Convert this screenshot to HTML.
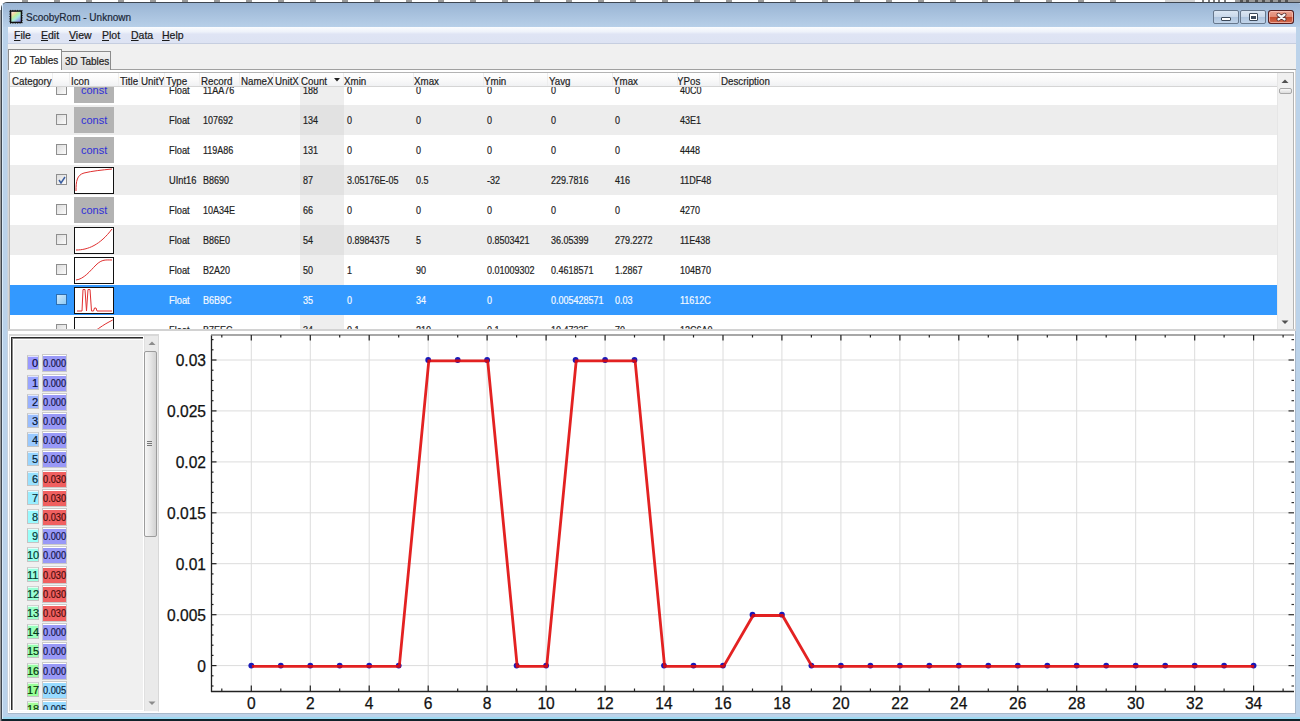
<!DOCTYPE html><html><head><meta charset="utf-8"><style>
*{box-sizing:border-box;margin:0;padding:0}
html,body{width:1300px;height:721px;overflow:hidden;background:#fff;font-family:"Liberation Sans", sans-serif;}
.a{position:absolute}
.t{position:absolute;white-space:nowrap;font-size:10px;line-height:12px;color:#1e1e1e;-webkit-text-stroke:.2px currentColor}
</style></head><body>

<div class="a" style="left:22px;top:0;width:6px;height:2px;background:#555;opacity:.6"></div>
<div class="a" style="left:54px;top:0;width:6px;height:2px;background:#555;opacity:.6"></div>
<div class="a" style="left:86px;top:0;width:6px;height:2px;background:#555;opacity:.6"></div>
<div class="a" style="left:118px;top:0;width:6px;height:2px;background:#555;opacity:.6"></div>
<div class="a" style="left:150px;top:0;width:6px;height:2px;background:#555;opacity:.6"></div>
<div class="a" style="left:182px;top:0;width:6px;height:2px;background:#555;opacity:.6"></div>
<div class="a" style="left:214px;top:0;width:6px;height:2px;background:#555;opacity:.6"></div>
<div class="a" style="left:246px;top:0;width:6px;height:2px;background:#555;opacity:.6"></div>
<div class="a" style="left:278px;top:0;width:6px;height:2px;background:#555;opacity:.6"></div>
<div class="a" style="left:310px;top:0;width:6px;height:2px;background:#555;opacity:.6"></div>
<div class="a" style="left:342px;top:0;width:6px;height:2px;background:#555;opacity:.6"></div>
<div class="a" style="left:374px;top:0;width:6px;height:2px;background:#555;opacity:.6"></div>
<div class="a" style="left:406px;top:0;width:6px;height:2px;background:#555;opacity:.6"></div>
<div class="a" style="left:438px;top:0;width:6px;height:2px;background:#555;opacity:.6"></div>
<div class="a" style="left:470px;top:0;width:6px;height:2px;background:#555;opacity:.6"></div>
<div class="a" style="left:502px;top:0;width:6px;height:2px;background:#555;opacity:.6"></div>
<div class="a" style="left:534px;top:0;width:6px;height:2px;background:#555;opacity:.6"></div>
<div class="a" style="left:566px;top:0;width:6px;height:2px;background:#555;opacity:.6"></div>
<div class="a" style="left:598px;top:0;width:6px;height:2px;background:#555;opacity:.6"></div>
<div class="a" style="left:630px;top:0;width:6px;height:2px;background:#555;opacity:.6"></div>
<div class="a" style="left:662px;top:0;width:6px;height:2px;background:#555;opacity:.6"></div>
<div class="a" style="left:694px;top:0;width:6px;height:2px;background:#555;opacity:.6"></div>
<div class="a" style="left:726px;top:0;width:6px;height:2px;background:#555;opacity:.6"></div>
<div class="a" style="left:758px;top:0;width:6px;height:2px;background:#555;opacity:.6"></div>
<div class="a" style="left:790px;top:0;width:6px;height:2px;background:#555;opacity:.6"></div>
<div class="a" style="left:822px;top:0;width:6px;height:2px;background:#555;opacity:.6"></div>
<div class="a" style="left:854px;top:0;width:6px;height:2px;background:#555;opacity:.6"></div>
<div class="a" style="left:886px;top:0;width:6px;height:2px;background:#555;opacity:.6"></div>
<div class="a" style="left:918px;top:0;width:6px;height:2px;background:#555;opacity:.6"></div>
<div class="a" style="left:950px;top:0;width:6px;height:2px;background:#555;opacity:.6"></div>
<div class="a" style="left:982px;top:0;width:6px;height:2px;background:#555;opacity:.6"></div>
<div class="a" style="left:1014px;top:0;width:6px;height:2px;background:#555;opacity:.6"></div>
<div class="a" style="left:1046px;top:0;width:6px;height:2px;background:#555;opacity:.6"></div>
<div class="a" style="left:1078px;top:0;width:6px;height:2px;background:#555;opacity:.6"></div>
<div class="a" style="left:1110px;top:0;width:6px;height:2px;background:#555;opacity:.6"></div>
<div class="a" style="left:1165px;top:0;width:30px;height:2px;background:#d4d4d4"></div>
<div class="a" style="left:1202px;top:0;width:2px;height:2px;background:#444;opacity:.7"></div>
<div class="a" style="left:1208px;top:0;width:2px;height:2px;background:#444;opacity:.7"></div>
<div class="a" style="left:1213px;top:0;width:2px;height:2px;background:#444;opacity:.7"></div>
<div class="a" style="left:1218px;top:0;width:2px;height:2px;background:#444;opacity:.7"></div>
<div class="a" style="left:1224px;top:0;width:2px;height:2px;background:#444;opacity:.7"></div>
<div class="a" style="left:1235px;top:0;width:65px;height:2px;background:#9a9a9a"></div>
<div class="a" style="left:1240px;top:0;width:3px;height:2px;background:#333;opacity:.7"></div>
<div class="a" style="left:1246px;top:0;width:3px;height:2px;background:#333;opacity:.7"></div>
<div class="a" style="left:1255px;top:0;width:3px;height:2px;background:#333;opacity:.7"></div>
<div class="a" style="left:1262px;top:0;width:3px;height:2px;background:#333;opacity:.7"></div>
<div class="a" style="left:1270px;top:0;width:3px;height:2px;background:#333;opacity:.7"></div>
<div class="a" style="left:1278px;top:0;width:3px;height:2px;background:#333;opacity:.7"></div>
<div class="a" style="left:1285px;top:0;width:3px;height:2px;background:#333;opacity:.7"></div>
<div class="a" style="left:1px;top:2px;width:1310px;height:730px;border:1px solid #3e4650;border-radius:6px 6px 0 0;background:#bcd3ea"></div>
<div class="a" style="left:0;top:10px;width:1px;height:711px;background:#9a9a9a"></div>
<div class="a" style="left:2px;top:3px;width:1300px;height:24px;border-radius:5px 5px 0 0;background:linear-gradient(#9ab5d4,#b7cfe8)"></div>
<div class="a" style="left:2px;top:27px;width:6px;height:690px;background:#bad2ea"></div>
<div class="a" style="left:2px;top:717px;width:1300px;height:2px;background:#9edbf3"></div>
<div class="a" style="left:2px;top:719px;width:1300px;height:2px;background:#10222a"></div>
<div class="a" style="left:2px;top:3px;width:1px;height:716px;background:#d8eafa"></div>
<svg class="a" style="left:9px;top:9px" width="14" height="15" viewBox="0 0 14 15">
<defs><linearGradient id="ig" x1="0" y1="0" x2=".8" y2="1"><stop offset="0" stop-color="#fff4f0"/><stop offset=".25" stop-color="#f8d8a8"/><stop offset=".45" stop-color="#b8f0a0"/><stop offset=".65" stop-color="#a8e8e0"/><stop offset="1" stop-color="#8c8ce8"/></linearGradient></defs>
<rect x="2" y="2.5" width="10" height="10.5" fill="url(#ig)"/>
<rect x="1.6" y="2.1" width="10.8" height="11.3" fill="none" stroke="#111" stroke-width="1.4"/>
<rect x="0.9" y="1.4" width="12.2" height="12.7" fill="none" stroke="#111" stroke-width="1" stroke-dasharray="1 1.4"/></svg>
<div class="t" style="left:26px;top:11px;font-size:10px;line-height:13px;color:#1b2838">ScoobyRom - Unknown</div>
<div class="a" style="left:1213px;top:10px;width:26px;height:14px;border:1px solid #66778c;border-radius:2px;background:linear-gradient(#dbe6f3 0%,#c9d8ea 50%,#aec4de 51%,#c2d5ea 100%);overflow:hidden"><div class="a" style="left:7px;top:6px;width:10px;height:4px;border:1px solid #3d4a5a;border-radius:1px;background:#fff"></div></div>
<div class="a" style="left:1240px;top:10px;width:26px;height:14px;border:1px solid #66778c;border-radius:2px;background:linear-gradient(#dbe6f3 0%,#c9d8ea 50%,#aec4de 51%,#c2d5ea 100%);overflow:hidden"><div class="a" style="left:8px;top:2px;width:9px;height:8px;border:1px solid #3d4a5a;border-radius:1px;background:#fff"><div class="a" style="left:1px;top:2px;width:5px;height:3px;background:#3d4a5a"></div></div></div>
<div class="a" style="left:1268px;top:10px;width:26px;height:14px;border:1px solid #66778c;border-radius:2px;background:linear-gradient(#eba08e 0%,#e08a74 50%,#c44a2c 51%,#d26a4e 100%);overflow:hidden"><svg class="a" style="left:0;top:0" width="24" height="12"><path d="M9.5,3.8 L15.5,8.2 M15.5,3.8 L9.5,8.2" stroke="#5a3030" stroke-width="4" stroke-linecap="round"/><path d="M9.5,3.8 L15.5,8.2 M15.5,3.8 L9.5,8.2" stroke="#f6f6f6" stroke-width="2.3" stroke-linecap="round"/></svg><div class="a" style="left:0;top:0;width:24px;height:12px;border:1px solid rgba(255,210,200,.6);border-radius:2px"></div></div>
<div class="a" style="left:1268px;top:10px;width:26px;height:14px;border:1px solid #5a1e1e;border-radius:3px"></div>
<div class="a" style="left:8px;top:27px;width:1288px;height:686px;background:#f0f0f0"></div>
<div class="a" style="left:8px;top:27px;width:1288px;height:17px;background:linear-gradient(#fbfcfe 0%,#eef2fa 30%,#dfe4f4 45%,#dde3f3 100%);border-bottom:1px solid #c6cee0"></div>
<div class="t" style="left:14px;top:29px;font-size:10.5px;line-height:12px;color:#1a1a1a"><u style="text-decoration:underline;text-underline-offset:1px">F</u>ile</div>
<div class="t" style="left:41px;top:29px;font-size:10.5px;line-height:12px;color:#1a1a1a"><u style="text-decoration:underline;text-underline-offset:1px">E</u>dit</div>
<div class="t" style="left:69px;top:29px;font-size:10.5px;line-height:12px;color:#1a1a1a"><u style="text-decoration:underline;text-underline-offset:1px">V</u>iew</div>
<div class="t" style="left:102px;top:29px;font-size:10.5px;line-height:12px;color:#1a1a1a"><u style="text-decoration:underline;text-underline-offset:1px">P</u>lot</div>
<div class="t" style="left:131px;top:29px;font-size:10.5px;line-height:12px;color:#1a1a1a"><u style="text-decoration:underline;text-underline-offset:1px">D</u>ata</div>
<div class="t" style="left:162px;top:29px;font-size:10.5px;line-height:12px;color:#1a1a1a"><u style="text-decoration:underline;text-underline-offset:1px">H</u>elp</div>
<div class="a" style="left:8px;top:69px;width:1288px;height:1px;background:#a0a0a0"></div>
<div class="a" style="left:61px;top:51px;width:50px;height:19px;border:1px solid #8c8c8c;border-bottom:none;background:linear-gradient(#f2f2f2,#dedede)"></div>
<div class="a" style="left:8px;top:49px;width:54px;height:22px;border:1px solid #8c8c8c;border-bottom:none;background:#fff"></div>
<div class="t" style="left:14px;top:55px;font-size:10px;line-height:12px">2D Tables</div>
<div class="t" style="left:65px;top:56px;font-size:10px;line-height:12px">3D Tables</div>
<div class="a" style="left:8px;top:70px;width:1288px;height:262px;border:1px solid #d6d6d6;border-top:none;background:#fff"></div>
<div class="a" style="left:7px;top:44px;width:1px;height:669px;background:#c6d2e0"></div>
<div class="a" style="left:9px;top:72px;width:1285px;height:258px;border:1px solid #b4b4b4;background:#fff;overflow:hidden" id="tbl">
<div class="a" style="left:0px;top:2px;width:1267px;height:30px;background:#ffffff"></div>
<div class="a" style="left:290px;top:2px;width:44px;height:30px;background:#eeeeee"></div>
<div class="a" style="left:46px;top:11px;width:11px;height:11px;border:1px solid #8f8f8f;background:linear-gradient(135deg,#dcdcdc,#fbfbfb)"></div>
<div class="a" style="left:64px;top:4px;width:40px;height:26px;background:#b3b3b3"></div>
<div class="t" style="left:71px;top:11px;font-size:11px;line-height:12px;color:#2f2fd6;-webkit-text-stroke:0">const</div>
<div class="t" style="left:159px;top:12px;color:#1e1e1e;transform:scaleX(.93);transform-origin:0 0">Float</div>
<div class="t" style="left:193px;top:12px;color:#1e1e1e;transform:scaleX(.9);transform-origin:0 0">11AA76</div>
<div class="t" style="left:293px;top:12px;color:#1e1e1e;transform:scaleX(.9);transform-origin:0 0">188</div>
<div class="t" style="left:337px;top:12px;color:#1e1e1e;transform:scaleX(.9);transform-origin:0 0">0</div>
<div class="t" style="left:406px;top:12px;color:#1e1e1e;transform:scaleX(.9);transform-origin:0 0">0</div>
<div class="t" style="left:477px;top:12px;color:#1e1e1e;transform:scaleX(.9);transform-origin:0 0">0</div>
<div class="t" style="left:541px;top:12px;color:#1e1e1e;transform:scaleX(.9);transform-origin:0 0">0</div>
<div class="t" style="left:605px;top:12px;color:#1e1e1e;transform:scaleX(.9);transform-origin:0 0">0</div>
<div class="t" style="left:670px;top:12px;color:#1e1e1e;transform:scaleX(.9);transform-origin:0 0">40C0</div>
<div class="a" style="left:0px;top:32px;width:1267px;height:30px;background:#ededed"></div>
<div class="a" style="left:290px;top:32px;width:44px;height:30px;background:#e2e2e2"></div>
<div class="a" style="left:46px;top:41px;width:11px;height:11px;border:1px solid #8f8f8f;background:linear-gradient(135deg,#dcdcdc,#fbfbfb)"></div>
<div class="a" style="left:64px;top:34px;width:40px;height:26px;background:#b3b3b3"></div>
<div class="t" style="left:71px;top:41px;font-size:11px;line-height:12px;color:#2f2fd6;-webkit-text-stroke:0">const</div>
<div class="t" style="left:159px;top:42px;color:#1e1e1e;transform:scaleX(.93);transform-origin:0 0">Float</div>
<div class="t" style="left:193px;top:42px;color:#1e1e1e;transform:scaleX(.9);transform-origin:0 0">107692</div>
<div class="t" style="left:293px;top:42px;color:#1e1e1e;transform:scaleX(.9);transform-origin:0 0">134</div>
<div class="t" style="left:337px;top:42px;color:#1e1e1e;transform:scaleX(.9);transform-origin:0 0">0</div>
<div class="t" style="left:406px;top:42px;color:#1e1e1e;transform:scaleX(.9);transform-origin:0 0">0</div>
<div class="t" style="left:477px;top:42px;color:#1e1e1e;transform:scaleX(.9);transform-origin:0 0">0</div>
<div class="t" style="left:541px;top:42px;color:#1e1e1e;transform:scaleX(.9);transform-origin:0 0">0</div>
<div class="t" style="left:605px;top:42px;color:#1e1e1e;transform:scaleX(.9);transform-origin:0 0">0</div>
<div class="t" style="left:670px;top:42px;color:#1e1e1e;transform:scaleX(.9);transform-origin:0 0">43E1</div>
<div class="a" style="left:0px;top:62px;width:1267px;height:30px;background:#ffffff"></div>
<div class="a" style="left:290px;top:62px;width:44px;height:30px;background:#eeeeee"></div>
<div class="a" style="left:46px;top:71px;width:11px;height:11px;border:1px solid #8f8f8f;background:linear-gradient(135deg,#dcdcdc,#fbfbfb)"></div>
<div class="a" style="left:64px;top:64px;width:40px;height:26px;background:#b3b3b3"></div>
<div class="t" style="left:71px;top:71px;font-size:11px;line-height:12px;color:#2f2fd6;-webkit-text-stroke:0">const</div>
<div class="t" style="left:159px;top:72px;color:#1e1e1e;transform:scaleX(.93);transform-origin:0 0">Float</div>
<div class="t" style="left:193px;top:72px;color:#1e1e1e;transform:scaleX(.9);transform-origin:0 0">119A86</div>
<div class="t" style="left:293px;top:72px;color:#1e1e1e;transform:scaleX(.9);transform-origin:0 0">131</div>
<div class="t" style="left:337px;top:72px;color:#1e1e1e;transform:scaleX(.9);transform-origin:0 0">0</div>
<div class="t" style="left:406px;top:72px;color:#1e1e1e;transform:scaleX(.9);transform-origin:0 0">0</div>
<div class="t" style="left:477px;top:72px;color:#1e1e1e;transform:scaleX(.9);transform-origin:0 0">0</div>
<div class="t" style="left:541px;top:72px;color:#1e1e1e;transform:scaleX(.9);transform-origin:0 0">0</div>
<div class="t" style="left:605px;top:72px;color:#1e1e1e;transform:scaleX(.9);transform-origin:0 0">0</div>
<div class="t" style="left:670px;top:72px;color:#1e1e1e;transform:scaleX(.9);transform-origin:0 0">4448</div>
<div class="a" style="left:0px;top:92px;width:1267px;height:30px;background:#ededed"></div>
<div class="a" style="left:290px;top:92px;width:44px;height:30px;background:#e2e2e2"></div>
<div class="a" style="left:46px;top:101px;width:11px;height:11px;border:1px solid #8f8f8f;background:linear-gradient(135deg,#dcdcdc,#fbfbfb)"></div>
<svg class="a" style="left:48px;top:103px" width="8" height="8" viewBox="0 0 8 8"><path d="M1,4 L3,7 L7,1" fill="none" stroke="#3a5ea0" stroke-width="1.5"/></svg>
<svg class="a" style="left:64px;top:94px" width="40" height="27" viewBox="0 0 40 27"><rect x="0.5" y="0.5" width="39" height="26" fill="#fff" stroke="#111"/><path d="M2,24 C2,14 3,8 10,6 C18,4 28,3 38,2" fill="none" stroke="#e03030" stroke-width="1"/></svg>
<div class="t" style="left:159px;top:102px;color:#1e1e1e;transform:scaleX(.93);transform-origin:0 0">UInt16</div>
<div class="t" style="left:193px;top:102px;color:#1e1e1e;transform:scaleX(.9);transform-origin:0 0">B8690</div>
<div class="t" style="left:293px;top:102px;color:#1e1e1e;transform:scaleX(.9);transform-origin:0 0">87</div>
<div class="t" style="left:337px;top:102px;color:#1e1e1e;transform:scaleX(.9);transform-origin:0 0">3.05176E-05</div>
<div class="t" style="left:406px;top:102px;color:#1e1e1e;transform:scaleX(.9);transform-origin:0 0">0.5</div>
<div class="t" style="left:477px;top:102px;color:#1e1e1e;transform:scaleX(.9);transform-origin:0 0">-32</div>
<div class="t" style="left:541px;top:102px;color:#1e1e1e;transform:scaleX(.9);transform-origin:0 0">229.7816</div>
<div class="t" style="left:605px;top:102px;color:#1e1e1e;transform:scaleX(.9);transform-origin:0 0">416</div>
<div class="t" style="left:670px;top:102px;color:#1e1e1e;transform:scaleX(.9);transform-origin:0 0">11DF48</div>
<div class="a" style="left:0px;top:122px;width:1267px;height:30px;background:#ffffff"></div>
<div class="a" style="left:290px;top:122px;width:44px;height:30px;background:#eeeeee"></div>
<div class="a" style="left:46px;top:131px;width:11px;height:11px;border:1px solid #8f8f8f;background:linear-gradient(135deg,#dcdcdc,#fbfbfb)"></div>
<div class="a" style="left:64px;top:124px;width:40px;height:26px;background:#b3b3b3"></div>
<div class="t" style="left:71px;top:131px;font-size:11px;line-height:12px;color:#2f2fd6;-webkit-text-stroke:0">const</div>
<div class="t" style="left:159px;top:132px;color:#1e1e1e;transform:scaleX(.93);transform-origin:0 0">Float</div>
<div class="t" style="left:193px;top:132px;color:#1e1e1e;transform:scaleX(.9);transform-origin:0 0">10A34E</div>
<div class="t" style="left:293px;top:132px;color:#1e1e1e;transform:scaleX(.9);transform-origin:0 0">66</div>
<div class="t" style="left:337px;top:132px;color:#1e1e1e;transform:scaleX(.9);transform-origin:0 0">0</div>
<div class="t" style="left:406px;top:132px;color:#1e1e1e;transform:scaleX(.9);transform-origin:0 0">0</div>
<div class="t" style="left:477px;top:132px;color:#1e1e1e;transform:scaleX(.9);transform-origin:0 0">0</div>
<div class="t" style="left:541px;top:132px;color:#1e1e1e;transform:scaleX(.9);transform-origin:0 0">0</div>
<div class="t" style="left:605px;top:132px;color:#1e1e1e;transform:scaleX(.9);transform-origin:0 0">0</div>
<div class="t" style="left:670px;top:132px;color:#1e1e1e;transform:scaleX(.9);transform-origin:0 0">4270</div>
<div class="a" style="left:0px;top:152px;width:1267px;height:30px;background:#ededed"></div>
<div class="a" style="left:290px;top:152px;width:44px;height:30px;background:#e2e2e2"></div>
<div class="a" style="left:46px;top:161px;width:11px;height:11px;border:1px solid #8f8f8f;background:linear-gradient(135deg,#dcdcdc,#fbfbfb)"></div>
<svg class="a" style="left:64px;top:154px" width="40" height="27" viewBox="0 0 40 27"><rect x="0.5" y="0.5" width="39" height="26" fill="#fff" stroke="#111"/><path d="M2,23 C14,23 26,18 38,2" fill="none" stroke="#e03030" stroke-width="1"/></svg>
<div class="t" style="left:159px;top:162px;color:#1e1e1e;transform:scaleX(.93);transform-origin:0 0">Float</div>
<div class="t" style="left:193px;top:162px;color:#1e1e1e;transform:scaleX(.9);transform-origin:0 0">B86E0</div>
<div class="t" style="left:293px;top:162px;color:#1e1e1e;transform:scaleX(.9);transform-origin:0 0">54</div>
<div class="t" style="left:337px;top:162px;color:#1e1e1e;transform:scaleX(.9);transform-origin:0 0">0.8984375</div>
<div class="t" style="left:406px;top:162px;color:#1e1e1e;transform:scaleX(.9);transform-origin:0 0">5</div>
<div class="t" style="left:477px;top:162px;color:#1e1e1e;transform:scaleX(.9);transform-origin:0 0">0.8503421</div>
<div class="t" style="left:541px;top:162px;color:#1e1e1e;transform:scaleX(.9);transform-origin:0 0">36.05399</div>
<div class="t" style="left:605px;top:162px;color:#1e1e1e;transform:scaleX(.9);transform-origin:0 0">279.2272</div>
<div class="t" style="left:670px;top:162px;color:#1e1e1e;transform:scaleX(.9);transform-origin:0 0">11E438</div>
<div class="a" style="left:0px;top:182px;width:1267px;height:30px;background:#ffffff"></div>
<div class="a" style="left:290px;top:182px;width:44px;height:30px;background:#eeeeee"></div>
<div class="a" style="left:46px;top:191px;width:11px;height:11px;border:1px solid #8f8f8f;background:linear-gradient(135deg,#dcdcdc,#fbfbfb)"></div>
<svg class="a" style="left:64px;top:184px" width="40" height="27" viewBox="0 0 40 27"><rect x="0.5" y="0.5" width="39" height="26" fill="#fff" stroke="#111"/><path d="M2,23 C10,22 16,14 22,8 C28,2 32,3 38,3" fill="none" stroke="#e03030" stroke-width="1"/></svg>
<div class="t" style="left:159px;top:192px;color:#1e1e1e;transform:scaleX(.93);transform-origin:0 0">Float</div>
<div class="t" style="left:193px;top:192px;color:#1e1e1e;transform:scaleX(.9);transform-origin:0 0">B2A20</div>
<div class="t" style="left:293px;top:192px;color:#1e1e1e;transform:scaleX(.9);transform-origin:0 0">50</div>
<div class="t" style="left:337px;top:192px;color:#1e1e1e;transform:scaleX(.9);transform-origin:0 0">1</div>
<div class="t" style="left:406px;top:192px;color:#1e1e1e;transform:scaleX(.9);transform-origin:0 0">90</div>
<div class="t" style="left:477px;top:192px;color:#1e1e1e;transform:scaleX(.9);transform-origin:0 0">0.01009302</div>
<div class="t" style="left:541px;top:192px;color:#1e1e1e;transform:scaleX(.9);transform-origin:0 0">0.4618571</div>
<div class="t" style="left:605px;top:192px;color:#1e1e1e;transform:scaleX(.9);transform-origin:0 0">1.2867</div>
<div class="t" style="left:670px;top:192px;color:#1e1e1e;transform:scaleX(.9);transform-origin:0 0">104B70</div>
<div class="a" style="left:0px;top:212px;width:1267px;height:30px;background:#3399ff"></div>
<div class="a" style="left:46px;top:221px;width:11px;height:11px;border:1px solid #2f6fb0;background:linear-gradient(135deg,#cfe8fb,#8ecbf5)"></div>
<svg class="a" style="left:64px;top:214px" width="40" height="27" viewBox="0 0 40 27"><rect x="0.5" y="0.5" width="39" height="26" fill="#fff" stroke="#111"/><path d="M3,24 L8,24 L9,2.5 L11,2.5 L12.5,24 L14,2.5 L16,2.5 L17.5,24 L19.5,24 L20.5,21 L22,21 L23,24 L38,24" fill="none" stroke="#e03030" stroke-width="1"/></svg>
<div class="t" style="left:159px;top:222px;color:#f4f9ff;transform:scaleX(.93);transform-origin:0 0">Float</div>
<div class="t" style="left:193px;top:222px;color:#f4f9ff;transform:scaleX(.9);transform-origin:0 0">B6B9C</div>
<div class="t" style="left:293px;top:222px;color:#f4f9ff;transform:scaleX(.9);transform-origin:0 0">35</div>
<div class="t" style="left:337px;top:222px;color:#f4f9ff;transform:scaleX(.9);transform-origin:0 0">0</div>
<div class="t" style="left:406px;top:222px;color:#f4f9ff;transform:scaleX(.9);transform-origin:0 0">34</div>
<div class="t" style="left:477px;top:222px;color:#f4f9ff;transform:scaleX(.9);transform-origin:0 0">0</div>
<div class="t" style="left:541px;top:222px;color:#f4f9ff;transform:scaleX(.9);transform-origin:0 0">0.005428571</div>
<div class="t" style="left:605px;top:222px;color:#f4f9ff;transform:scaleX(.9);transform-origin:0 0">0.03</div>
<div class="t" style="left:670px;top:222px;color:#f4f9ff;transform:scaleX(.9);transform-origin:0 0">11612C</div>
<div class="a" style="left:0px;top:242px;width:1267px;height:30px;background:#ffffff"></div>
<div class="a" style="left:290px;top:242px;width:44px;height:30px;background:#eeeeee"></div>
<div class="a" style="left:46px;top:251px;width:11px;height:11px;border:1px solid #8f8f8f;background:linear-gradient(135deg,#dcdcdc,#fbfbfb)"></div>
<svg class="a" style="left:64px;top:244px" width="40" height="27" viewBox="0 0 40 27"><rect x="0.5" y="0.5" width="39" height="26" fill="#fff" stroke="#111"/><path d="M2,25 C10,22 18,16 24.5,11.5 S33,6 38.7,3" fill="none" stroke="#e03030" stroke-width="1"/></svg>
<div class="t" style="left:159px;top:252px;color:#1e1e1e;transform:scaleX(.93);transform-origin:0 0">Float</div>
<div class="t" style="left:193px;top:252px;color:#1e1e1e;transform:scaleX(.9);transform-origin:0 0">B7EEC</div>
<div class="t" style="left:293px;top:252px;color:#1e1e1e;transform:scaleX(.9);transform-origin:0 0">34</div>
<div class="t" style="left:337px;top:252px;color:#1e1e1e;transform:scaleX(.9);transform-origin:0 0">0.1</div>
<div class="t" style="left:406px;top:252px;color:#1e1e1e;transform:scaleX(.9);transform-origin:0 0">210</div>
<div class="t" style="left:477px;top:252px;color:#1e1e1e;transform:scaleX(.9);transform-origin:0 0">0.1</div>
<div class="t" style="left:541px;top:252px;color:#1e1e1e;transform:scaleX(.9);transform-origin:0 0">10.47335</div>
<div class="t" style="left:605px;top:252px;color:#1e1e1e;transform:scaleX(.9);transform-origin:0 0">70</div>
<div class="t" style="left:670px;top:252px;color:#1e1e1e;transform:scaleX(.9);transform-origin:0 0">12C6A0</div>
<div class="a" style="left:0px;top:0px;width:1267px;height:14px;background:linear-gradient(#ffffff 0%,#fafafa 50%,#f0f1f3 100%);border-bottom:1px solid #d5d5d5"></div>
<div class="t" style="left:2px;top:2px;color:#1e1e1e;font-size:10.5px;transform:scaleX(.93);transform-origin:0 0">Category</div>
<div class="t" style="left:61px;top:2px;color:#1e1e1e;font-size:10.5px;transform:scaleX(.93);transform-origin:0 0">Icon</div>
<div class="t" style="left:110px;top:2px;color:#1e1e1e;font-size:10.5px;transform:scaleX(.93);transform-origin:0 0">Title</div>
<div class="t" style="left:131px;top:2px;color:#1e1e1e;font-size:10.5px;transform:scaleX(.93);transform-origin:0 0">UnitY</div>
<div class="t" style="left:156px;top:2px;color:#1e1e1e;font-size:10.5px;transform:scaleX(.93);transform-origin:0 0">Type</div>
<div class="t" style="left:191px;top:2px;color:#1e1e1e;font-size:10.5px;transform:scaleX(.93);transform-origin:0 0">Record</div>
<div class="t" style="left:231px;top:2px;color:#1e1e1e;font-size:10.5px;transform:scaleX(.93);transform-origin:0 0">NameX</div>
<div class="t" style="left:265px;top:2px;color:#1e1e1e;font-size:10.5px;transform:scaleX(.93);transform-origin:0 0">UnitX</div>
<div class="t" style="left:291px;top:2px;color:#1e1e1e;font-size:10.5px;transform:scaleX(.93);transform-origin:0 0">Count</div>
<div class="t" style="left:334px;top:2px;color:#1e1e1e;font-size:10.5px;transform:scaleX(.93);transform-origin:0 0">Xmin</div>
<div class="t" style="left:404px;top:2px;color:#1e1e1e;font-size:10.5px;transform:scaleX(.93);transform-origin:0 0">Xmax</div>
<div class="t" style="left:474px;top:2px;color:#1e1e1e;font-size:10.5px;transform:scaleX(.93);transform-origin:0 0">Ymin</div>
<div class="t" style="left:539px;top:2px;color:#1e1e1e;font-size:10.5px;transform:scaleX(.93);transform-origin:0 0">Yavg</div>
<div class="t" style="left:603px;top:2px;color:#1e1e1e;font-size:10.5px;transform:scaleX(.93);transform-origin:0 0">Ymax</div>
<div class="t" style="left:667px;top:2px;color:#1e1e1e;font-size:10.5px;transform:scaleX(.93);transform-origin:0 0">YPos</div>
<div class="t" style="left:711px;top:2px;color:#1e1e1e;font-size:10.5px;transform:scaleX(.93);transform-origin:0 0">Description</div>
<div class="a" style="left:42px;top:0px;width:1px;height:13px;background:#eeeeee"></div>
<div class="a" style="left:59px;top:0px;width:1px;height:13px;background:#eeeeee"></div>
<div class="a" style="left:108px;top:0px;width:1px;height:13px;background:#eeeeee"></div>
<div class="a" style="left:129px;top:0px;width:1px;height:13px;background:#eeeeee"></div>
<div class="a" style="left:154px;top:0px;width:1px;height:13px;background:#eeeeee"></div>
<div class="a" style="left:189px;top:0px;width:1px;height:13px;background:#eeeeee"></div>
<div class="a" style="left:229px;top:0px;width:1px;height:13px;background:#eeeeee"></div>
<div class="a" style="left:263px;top:0px;width:1px;height:13px;background:#eeeeee"></div>
<div class="a" style="left:289px;top:0px;width:1px;height:13px;background:#eeeeee"></div>
<div class="a" style="left:333px;top:0px;width:1px;height:13px;background:#eeeeee"></div>
<div class="a" style="left:403px;top:0px;width:1px;height:13px;background:#eeeeee"></div>
<div class="a" style="left:473px;top:0px;width:1px;height:13px;background:#eeeeee"></div>
<div class="a" style="left:537px;top:0px;width:1px;height:13px;background:#eeeeee"></div>
<div class="a" style="left:602px;top:0px;width:1px;height:13px;background:#eeeeee"></div>
<div class="a" style="left:667px;top:0px;width:1px;height:13px;background:#eeeeee"></div>
<div class="a" style="left:709px;top:0px;width:1px;height:13px;background:#eeeeee"></div>
<svg class="a" style="left:324px;top:5px" width="6" height="4"><path d="M0,0 L6,0 L3,3.5z" fill="#222"/></svg>
<div class="a" style="left:1267px;top:0px;width:16px;height:257px;background:#f0f0f0;border-left:1px solid #e6e6e6"></div>
<svg class="a" style="left:1271px;top:6px" width="8" height="5"><path d="M0.5,4 L4,0.5 L7.5,4z" fill="#505050"/></svg>
<div class="a" style="left:1269px;top:15px;width:13px;height:6px;border:1px solid #a8a8a8;border-radius:2px;background:linear-gradient(#f8f8f8,#dcdcdc)"></div>
<svg class="a" style="left:1271px;top:247px" width="8" height="5"><path d="M0.5,0.5 L7.5,0.5 L4,4z" fill="#505050"/></svg>
</div>
<div class="a" style="left:8px;top:331px;width:1287px;height:382px;background:#fff"></div>
<div class="a" style="left:1295px;top:331px;width:1px;height:383px;background:#a9b9cb"></div>
<div class="a" style="left:8px;top:713px;width:1288px;height:1px;background:#a9b9cb"></div>
<div class="a" style="left:8px;top:329px;width:1287px;height:2px;background:#d2d2d2"></div>
<div class="a" style="left:9px;top:334px;width:150px;height:378px;background:#fff;border:1px solid #d8d8d8;border-top-width:2px;border-bottom-color:#fafafa"></div>
<div class="a" style="left:11px;top:337px;width:132px;height:373px;background:#f0f0f0;border-top:1px solid #2a2a2a;border-left:1px solid #2a2a2a;box-shadow:inset 1px 1px 0 #8a8a8a,inset 2px 2px 0 #fff"></div>
<div class="a" style="left:14px;top:339px;width:129px;height:371px;overflow:hidden">
<div class="a" style="left:13px;top:16px;width:12px;height:15px;border:1px solid #c4c4c4;border-top-color:#d0d0d0;background:#9999ff;box-shadow:inset 0 1px 0 rgba(255,255,255,.7)"></div>
<div class="t" style="left:13px;top:18px;width:11px;text-align:right;font-size:11px;line-height:13px;color:#060638">0</div>
<div class="a" style="left:28px;top:15px;width:25px;height:18px;border:1px solid #cacaca;background:#9999f7;box-shadow:inset 0 1px 0 #fff"></div>
<div class="t" style="left:29px;top:18px;font-size:11px;line-height:13px;color:#14144a;transform:scaleX(.84);transform-origin:0 0">0.000</div>
<div class="a" style="left:13px;top:36px;width:12px;height:15px;border:1px solid #c4c4c4;border-top-color:#d0d0d0;background:#99a5ff;box-shadow:inset 0 1px 0 rgba(255,255,255,.7)"></div>
<div class="t" style="left:13px;top:38px;width:11px;text-align:right;font-size:11px;line-height:13px;color:#060c38">1</div>
<div class="a" style="left:28px;top:35px;width:25px;height:18px;border:1px solid #cacaca;background:#9999f7;box-shadow:inset 0 1px 0 #fff"></div>
<div class="t" style="left:29px;top:38px;font-size:11px;line-height:13px;color:#14144a;transform:scaleX(.84);transform-origin:0 0">0.000</div>
<div class="a" style="left:13px;top:55px;width:12px;height:15px;border:1px solid #c4c4c4;border-top-color:#d0d0d0;background:#99b1ff;box-shadow:inset 0 1px 0 rgba(255,255,255,.7)"></div>
<div class="t" style="left:13px;top:57px;width:11px;text-align:right;font-size:11px;line-height:13px;color:#061138">2</div>
<div class="a" style="left:28px;top:54px;width:25px;height:18px;border:1px solid #cacaca;background:#9999f7;box-shadow:inset 0 1px 0 #fff"></div>
<div class="t" style="left:29px;top:57px;font-size:11px;line-height:13px;color:#14144a;transform:scaleX(.84);transform-origin:0 0">0.000</div>
<div class="a" style="left:13px;top:74px;width:12px;height:15px;border:1px solid #c4c4c4;border-top-color:#d0d0d0;background:#99bdff;box-shadow:inset 0 1px 0 rgba(255,255,255,.7)"></div>
<div class="t" style="left:13px;top:76px;width:11px;text-align:right;font-size:11px;line-height:13px;color:#061738">3</div>
<div class="a" style="left:28px;top:73px;width:25px;height:18px;border:1px solid #cacaca;background:#9999f7;box-shadow:inset 0 1px 0 #fff"></div>
<div class="t" style="left:29px;top:76px;font-size:11px;line-height:13px;color:#14144a;transform:scaleX(.84);transform-origin:0 0">0.000</div>
<div class="a" style="left:13px;top:93px;width:12px;height:15px;border:1px solid #c4c4c4;border-top-color:#d0d0d0;background:#99c9ff;box-shadow:inset 0 1px 0 rgba(255,255,255,.7)"></div>
<div class="t" style="left:13px;top:95px;width:11px;text-align:right;font-size:11px;line-height:13px;color:#061d38">4</div>
<div class="a" style="left:28px;top:92px;width:25px;height:18px;border:1px solid #cacaca;background:#9999f7;box-shadow:inset 0 1px 0 #fff"></div>
<div class="t" style="left:29px;top:95px;font-size:11px;line-height:13px;color:#14144a;transform:scaleX(.84);transform-origin:0 0">0.000</div>
<div class="a" style="left:13px;top:112px;width:12px;height:15px;border:1px solid #c4c4c4;border-top-color:#d0d0d0;background:#99d5ff;box-shadow:inset 0 1px 0 rgba(255,255,255,.7)"></div>
<div class="t" style="left:13px;top:114px;width:11px;text-align:right;font-size:11px;line-height:13px;color:#062338">5</div>
<div class="a" style="left:28px;top:111px;width:25px;height:18px;border:1px solid #cacaca;background:#9999f7;box-shadow:inset 0 1px 0 #fff"></div>
<div class="t" style="left:29px;top:114px;font-size:11px;line-height:13px;color:#14144a;transform:scaleX(.84);transform-origin:0 0">0.000</div>
<div class="a" style="left:13px;top:132px;width:12px;height:15px;border:1px solid #c4c4c4;border-top-color:#d0d0d0;background:#99e1ff;box-shadow:inset 0 1px 0 rgba(255,255,255,.7)"></div>
<div class="t" style="left:13px;top:134px;width:11px;text-align:right;font-size:11px;line-height:13px;color:#062938">6</div>
<div class="a" style="left:28px;top:131px;width:25px;height:18px;border:1px solid #cacaca;background:#f06060;box-shadow:inset 0 1px 0 #fff"></div>
<div class="t" style="left:29px;top:134px;font-size:11px;line-height:13px;color:#4a0c0c;transform:scaleX(.84);transform-origin:0 0">0.030</div>
<div class="a" style="left:13px;top:151px;width:12px;height:15px;border:1px solid #c4c4c4;border-top-color:#d0d0d0;background:#99edff;box-shadow:inset 0 1px 0 rgba(255,255,255,.7)"></div>
<div class="t" style="left:13px;top:153px;width:11px;text-align:right;font-size:11px;line-height:13px;color:#062f38">7</div>
<div class="a" style="left:28px;top:150px;width:25px;height:18px;border:1px solid #cacaca;background:#f06060;box-shadow:inset 0 1px 0 #fff"></div>
<div class="t" style="left:29px;top:153px;font-size:11px;line-height:13px;color:#4a0c0c;transform:scaleX(.84);transform-origin:0 0">0.030</div>
<div class="a" style="left:13px;top:170px;width:12px;height:15px;border:1px solid #c4c4c4;border-top-color:#d0d0d0;background:#99f9ff;box-shadow:inset 0 1px 0 rgba(255,255,255,.7)"></div>
<div class="t" style="left:13px;top:172px;width:11px;text-align:right;font-size:11px;line-height:13px;color:#063538">8</div>
<div class="a" style="left:28px;top:169px;width:25px;height:18px;border:1px solid #cacaca;background:#f06060;box-shadow:inset 0 1px 0 #fff"></div>
<div class="t" style="left:29px;top:172px;font-size:11px;line-height:13px;color:#4a0c0c;transform:scaleX(.84);transform-origin:0 0">0.030</div>
<div class="a" style="left:13px;top:189px;width:12px;height:15px;border:1px solid #c4c4c4;border-top-color:#d0d0d0;background:#99fff9;box-shadow:inset 0 1px 0 rgba(255,255,255,.7)"></div>
<div class="t" style="left:13px;top:191px;width:11px;text-align:right;font-size:11px;line-height:13px;color:#063835">9</div>
<div class="a" style="left:28px;top:188px;width:25px;height:18px;border:1px solid #cacaca;background:#9999f7;box-shadow:inset 0 1px 0 #fff"></div>
<div class="t" style="left:29px;top:191px;font-size:11px;line-height:13px;color:#14144a;transform:scaleX(.84);transform-origin:0 0">0.000</div>
<div class="a" style="left:13px;top:208px;width:12px;height:15px;border:1px solid #c4c4c4;border-top-color:#d0d0d0;background:#99ffed;box-shadow:inset 0 1px 0 rgba(255,255,255,.7)"></div>
<div class="t" style="left:13px;top:210px;width:11px;text-align:right;font-size:11px;line-height:13px;color:#06382f">10</div>
<div class="a" style="left:28px;top:207px;width:25px;height:18px;border:1px solid #cacaca;background:#9999f7;box-shadow:inset 0 1px 0 #fff"></div>
<div class="t" style="left:29px;top:210px;font-size:11px;line-height:13px;color:#14144a;transform:scaleX(.84);transform-origin:0 0">0.000</div>
<div class="a" style="left:13px;top:228px;width:12px;height:15px;border:1px solid #c4c4c4;border-top-color:#d0d0d0;background:#99ffe1;box-shadow:inset 0 1px 0 rgba(255,255,255,.7)"></div>
<div class="t" style="left:13px;top:230px;width:11px;text-align:right;font-size:11px;line-height:13px;color:#063829">11</div>
<div class="a" style="left:28px;top:227px;width:25px;height:18px;border:1px solid #cacaca;background:#f06060;box-shadow:inset 0 1px 0 #fff"></div>
<div class="t" style="left:29px;top:230px;font-size:11px;line-height:13px;color:#4a0c0c;transform:scaleX(.84);transform-origin:0 0">0.030</div>
<div class="a" style="left:13px;top:247px;width:12px;height:15px;border:1px solid #c4c4c4;border-top-color:#d0d0d0;background:#99ffd5;box-shadow:inset 0 1px 0 rgba(255,255,255,.7)"></div>
<div class="t" style="left:13px;top:249px;width:11px;text-align:right;font-size:11px;line-height:13px;color:#063823">12</div>
<div class="a" style="left:28px;top:246px;width:25px;height:18px;border:1px solid #cacaca;background:#f06060;box-shadow:inset 0 1px 0 #fff"></div>
<div class="t" style="left:29px;top:249px;font-size:11px;line-height:13px;color:#4a0c0c;transform:scaleX(.84);transform-origin:0 0">0.030</div>
<div class="a" style="left:13px;top:266px;width:12px;height:15px;border:1px solid #c4c4c4;border-top-color:#d0d0d0;background:#99ffc9;box-shadow:inset 0 1px 0 rgba(255,255,255,.7)"></div>
<div class="t" style="left:13px;top:268px;width:11px;text-align:right;font-size:11px;line-height:13px;color:#06381d">13</div>
<div class="a" style="left:28px;top:265px;width:25px;height:18px;border:1px solid #cacaca;background:#f06060;box-shadow:inset 0 1px 0 #fff"></div>
<div class="t" style="left:29px;top:268px;font-size:11px;line-height:13px;color:#4a0c0c;transform:scaleX(.84);transform-origin:0 0">0.030</div>
<div class="a" style="left:13px;top:285px;width:12px;height:15px;border:1px solid #c4c4c4;border-top-color:#d0d0d0;background:#99ffbd;box-shadow:inset 0 1px 0 rgba(255,255,255,.7)"></div>
<div class="t" style="left:13px;top:287px;width:11px;text-align:right;font-size:11px;line-height:13px;color:#063817">14</div>
<div class="a" style="left:28px;top:284px;width:25px;height:18px;border:1px solid #cacaca;background:#9999f7;box-shadow:inset 0 1px 0 #fff"></div>
<div class="t" style="left:29px;top:287px;font-size:11px;line-height:13px;color:#14144a;transform:scaleX(.84);transform-origin:0 0">0.000</div>
<div class="a" style="left:13px;top:304px;width:12px;height:15px;border:1px solid #c4c4c4;border-top-color:#d0d0d0;background:#99ffb1;box-shadow:inset 0 1px 0 rgba(255,255,255,.7)"></div>
<div class="t" style="left:13px;top:306px;width:11px;text-align:right;font-size:11px;line-height:13px;color:#063811">15</div>
<div class="a" style="left:28px;top:303px;width:25px;height:18px;border:1px solid #cacaca;background:#9999f7;box-shadow:inset 0 1px 0 #fff"></div>
<div class="t" style="left:29px;top:306px;font-size:11px;line-height:13px;color:#14144a;transform:scaleX(.84);transform-origin:0 0">0.000</div>
<div class="a" style="left:13px;top:324px;width:12px;height:15px;border:1px solid #c4c4c4;border-top-color:#d0d0d0;background:#99ffa5;box-shadow:inset 0 1px 0 rgba(255,255,255,.7)"></div>
<div class="t" style="left:13px;top:326px;width:11px;text-align:right;font-size:11px;line-height:13px;color:#06380c">16</div>
<div class="a" style="left:28px;top:323px;width:25px;height:18px;border:1px solid #cacaca;background:#9999f7;box-shadow:inset 0 1px 0 #fff"></div>
<div class="t" style="left:29px;top:326px;font-size:11px;line-height:13px;color:#14144a;transform:scaleX(.84);transform-origin:0 0">0.000</div>
<div class="a" style="left:13px;top:343px;width:12px;height:15px;border:1px solid #c4c4c4;border-top-color:#d0d0d0;background:#99ff99;box-shadow:inset 0 1px 0 rgba(255,255,255,.7)"></div>
<div class="t" style="left:13px;top:345px;width:11px;text-align:right;font-size:11px;line-height:13px;color:#063806">17</div>
<div class="a" style="left:28px;top:342px;width:25px;height:18px;border:1px solid #cacaca;background:#99dbff;box-shadow:inset 0 1px 0 #fff"></div>
<div class="t" style="left:29px;top:345px;font-size:11px;line-height:13px;color:#0c2440;transform:scaleX(.84);transform-origin:0 0">0.005</div>
<div class="a" style="left:13px;top:362px;width:12px;height:15px;border:1px solid #c4c4c4;border-top-color:#d0d0d0;background:#a5ff99;box-shadow:inset 0 1px 0 rgba(255,255,255,.7)"></div>
<div class="t" style="left:13px;top:364px;width:11px;text-align:right;font-size:11px;line-height:13px;color:#0c3806">18</div>
<div class="a" style="left:28px;top:361px;width:25px;height:18px;border:1px solid #cacaca;background:#99dbff;box-shadow:inset 0 1px 0 #fff"></div>
<div class="t" style="left:29px;top:364px;font-size:11px;line-height:13px;color:#0c2440;transform:scaleX(.84);transform-origin:0 0">0.005</div>
</div>
<div class="a" style="left:144px;top:336px;width:14px;height:375px;background:#eaeaea;border-left:1px solid #e0e0e0"></div>
<svg class="a" style="left:148px;top:341px" width="8" height="5"><path d="M0.5,4 L4,0.5 L7.5,4z" fill="#8c8c8c"/></svg>
<div class="a" style="left:144px;top:351px;width:13px;height:186px;border:1px solid #9c9c9c;border-radius:2px;background:linear-gradient(90deg,#f6f6f6,#e6e6e6 50%,#d2d2d2)"></div>
<div class="a" style="left:147px;top:441px;width:5px;height:5px;border-top:1px solid #777;border-bottom:1px solid #777"><div class="a" style="left:0;top:1px;width:5px;height:1px;background:#777"></div></div>
<svg class="a" style="left:148px;top:701px" width="8" height="5"><path d="M0.5,0.5 L7.5,0.5 L4,4z" fill="#8c8c8c"/></svg>
<svg class="a" style="left:0;top:0" width="1300" height="721" viewBox="0 0 1300 721">
<line x1="251.3" y1="336" x2="251.3" y2="691" stroke="#dcdcdc" stroke-width="1"/>
<line x1="310.3" y1="336" x2="310.3" y2="691" stroke="#dcdcdc" stroke-width="1"/>
<line x1="369.2" y1="336" x2="369.2" y2="691" stroke="#dcdcdc" stroke-width="1"/>
<line x1="428.2" y1="336" x2="428.2" y2="691" stroke="#dcdcdc" stroke-width="1"/>
<line x1="487.1" y1="336" x2="487.1" y2="691" stroke="#dcdcdc" stroke-width="1"/>
<line x1="546.1" y1="336" x2="546.1" y2="691" stroke="#dcdcdc" stroke-width="1"/>
<line x1="605.1" y1="336" x2="605.1" y2="691" stroke="#dcdcdc" stroke-width="1"/>
<line x1="664.0" y1="336" x2="664.0" y2="691" stroke="#dcdcdc" stroke-width="1"/>
<line x1="723.0" y1="336" x2="723.0" y2="691" stroke="#dcdcdc" stroke-width="1"/>
<line x1="781.9" y1="336" x2="781.9" y2="691" stroke="#dcdcdc" stroke-width="1"/>
<line x1="840.9" y1="336" x2="840.9" y2="691" stroke="#dcdcdc" stroke-width="1"/>
<line x1="899.9" y1="336" x2="899.9" y2="691" stroke="#dcdcdc" stroke-width="1"/>
<line x1="958.8" y1="336" x2="958.8" y2="691" stroke="#dcdcdc" stroke-width="1"/>
<line x1="1017.8" y1="336" x2="1017.8" y2="691" stroke="#dcdcdc" stroke-width="1"/>
<line x1="1076.7" y1="336" x2="1076.7" y2="691" stroke="#dcdcdc" stroke-width="1"/>
<line x1="1135.7" y1="336" x2="1135.7" y2="691" stroke="#dcdcdc" stroke-width="1"/>
<line x1="1194.7" y1="336" x2="1194.7" y2="691" stroke="#dcdcdc" stroke-width="1"/>
<line x1="1253.6" y1="336" x2="1253.6" y2="691" stroke="#dcdcdc" stroke-width="1"/>
<line x1="212" y1="665.6" x2="1294" y2="665.6" stroke="#dcdcdc" stroke-width="1"/>
<line x1="212" y1="614.7" x2="1294" y2="614.7" stroke="#dcdcdc" stroke-width="1"/>
<line x1="212" y1="563.7" x2="1294" y2="563.7" stroke="#dcdcdc" stroke-width="1"/>
<line x1="212" y1="512.8" x2="1294" y2="512.8" stroke="#dcdcdc" stroke-width="1"/>
<line x1="212" y1="461.9" x2="1294" y2="461.9" stroke="#dcdcdc" stroke-width="1"/>
<line x1="212" y1="410.9" x2="1294" y2="410.9" stroke="#dcdcdc" stroke-width="1"/>
<line x1="212" y1="360.0" x2="1294" y2="360.0" stroke="#dcdcdc" stroke-width="1"/>
<line x1="211.5" y1="335" x2="211.5" y2="692" stroke="#222" stroke-width="1.3"/>
<line x1="211" y1="691.5" x2="1294" y2="691.5" stroke="#222" stroke-width="1.3"/>
<line x1="211" y1="335" x2="1294" y2="335" stroke="#8a8a8a" stroke-width="1.6"/>
<line x1="211" y1="686.0" x2="213.5" y2="686.0" stroke="#222" stroke-width="1.2"/>
<line x1="1291.5" y1="686.0" x2="1294" y2="686.0" stroke="#333" stroke-width="1.2"/>
<line x1="211" y1="675.8" x2="213.5" y2="675.8" stroke="#222" stroke-width="1.2"/>
<line x1="1291.5" y1="675.8" x2="1294" y2="675.8" stroke="#333" stroke-width="1.2"/>
<line x1="211" y1="665.6" x2="216.5" y2="665.6" stroke="#222" stroke-width="1.2"/>
<line x1="1288.5" y1="665.6" x2="1294" y2="665.6" stroke="#333" stroke-width="1.2"/>
<line x1="211" y1="655.4" x2="213.5" y2="655.4" stroke="#222" stroke-width="1.2"/>
<line x1="1291.5" y1="655.4" x2="1294" y2="655.4" stroke="#333" stroke-width="1.2"/>
<line x1="211" y1="645.2" x2="213.5" y2="645.2" stroke="#222" stroke-width="1.2"/>
<line x1="1291.5" y1="645.2" x2="1294" y2="645.2" stroke="#333" stroke-width="1.2"/>
<line x1="211" y1="635.0" x2="213.5" y2="635.0" stroke="#222" stroke-width="1.2"/>
<line x1="1291.5" y1="635.0" x2="1294" y2="635.0" stroke="#333" stroke-width="1.2"/>
<line x1="211" y1="624.9" x2="213.5" y2="624.9" stroke="#222" stroke-width="1.2"/>
<line x1="1291.5" y1="624.9" x2="1294" y2="624.9" stroke="#333" stroke-width="1.2"/>
<line x1="211" y1="614.7" x2="216.5" y2="614.7" stroke="#222" stroke-width="1.2"/>
<line x1="1288.5" y1="614.7" x2="1294" y2="614.7" stroke="#333" stroke-width="1.2"/>
<line x1="211" y1="604.5" x2="213.5" y2="604.5" stroke="#222" stroke-width="1.2"/>
<line x1="1291.5" y1="604.5" x2="1294" y2="604.5" stroke="#333" stroke-width="1.2"/>
<line x1="211" y1="594.3" x2="213.5" y2="594.3" stroke="#222" stroke-width="1.2"/>
<line x1="1291.5" y1="594.3" x2="1294" y2="594.3" stroke="#333" stroke-width="1.2"/>
<line x1="211" y1="584.1" x2="213.5" y2="584.1" stroke="#222" stroke-width="1.2"/>
<line x1="1291.5" y1="584.1" x2="1294" y2="584.1" stroke="#333" stroke-width="1.2"/>
<line x1="211" y1="573.9" x2="213.5" y2="573.9" stroke="#222" stroke-width="1.2"/>
<line x1="1291.5" y1="573.9" x2="1294" y2="573.9" stroke="#333" stroke-width="1.2"/>
<line x1="211" y1="563.7" x2="216.5" y2="563.7" stroke="#222" stroke-width="1.2"/>
<line x1="1288.5" y1="563.7" x2="1294" y2="563.7" stroke="#333" stroke-width="1.2"/>
<line x1="211" y1="553.5" x2="213.5" y2="553.5" stroke="#222" stroke-width="1.2"/>
<line x1="1291.5" y1="553.5" x2="1294" y2="553.5" stroke="#333" stroke-width="1.2"/>
<line x1="211" y1="543.4" x2="213.5" y2="543.4" stroke="#222" stroke-width="1.2"/>
<line x1="1291.5" y1="543.4" x2="1294" y2="543.4" stroke="#333" stroke-width="1.2"/>
<line x1="211" y1="533.2" x2="213.5" y2="533.2" stroke="#222" stroke-width="1.2"/>
<line x1="1291.5" y1="533.2" x2="1294" y2="533.2" stroke="#333" stroke-width="1.2"/>
<line x1="211" y1="523.0" x2="213.5" y2="523.0" stroke="#222" stroke-width="1.2"/>
<line x1="1291.5" y1="523.0" x2="1294" y2="523.0" stroke="#333" stroke-width="1.2"/>
<line x1="211" y1="512.8" x2="216.5" y2="512.8" stroke="#222" stroke-width="1.2"/>
<line x1="1288.5" y1="512.8" x2="1294" y2="512.8" stroke="#333" stroke-width="1.2"/>
<line x1="211" y1="502.6" x2="213.5" y2="502.6" stroke="#222" stroke-width="1.2"/>
<line x1="1291.5" y1="502.6" x2="1294" y2="502.6" stroke="#333" stroke-width="1.2"/>
<line x1="211" y1="492.4" x2="213.5" y2="492.4" stroke="#222" stroke-width="1.2"/>
<line x1="1291.5" y1="492.4" x2="1294" y2="492.4" stroke="#333" stroke-width="1.2"/>
<line x1="211" y1="482.2" x2="213.5" y2="482.2" stroke="#222" stroke-width="1.2"/>
<line x1="1291.5" y1="482.2" x2="1294" y2="482.2" stroke="#333" stroke-width="1.2"/>
<line x1="211" y1="472.1" x2="213.5" y2="472.1" stroke="#222" stroke-width="1.2"/>
<line x1="1291.5" y1="472.1" x2="1294" y2="472.1" stroke="#333" stroke-width="1.2"/>
<line x1="211" y1="461.9" x2="216.5" y2="461.9" stroke="#222" stroke-width="1.2"/>
<line x1="1288.5" y1="461.9" x2="1294" y2="461.9" stroke="#333" stroke-width="1.2"/>
<line x1="211" y1="451.7" x2="213.5" y2="451.7" stroke="#222" stroke-width="1.2"/>
<line x1="1291.5" y1="451.7" x2="1294" y2="451.7" stroke="#333" stroke-width="1.2"/>
<line x1="211" y1="441.5" x2="213.5" y2="441.5" stroke="#222" stroke-width="1.2"/>
<line x1="1291.5" y1="441.5" x2="1294" y2="441.5" stroke="#333" stroke-width="1.2"/>
<line x1="211" y1="431.3" x2="213.5" y2="431.3" stroke="#222" stroke-width="1.2"/>
<line x1="1291.5" y1="431.3" x2="1294" y2="431.3" stroke="#333" stroke-width="1.2"/>
<line x1="211" y1="421.1" x2="213.5" y2="421.1" stroke="#222" stroke-width="1.2"/>
<line x1="1291.5" y1="421.1" x2="1294" y2="421.1" stroke="#333" stroke-width="1.2"/>
<line x1="211" y1="410.9" x2="216.5" y2="410.9" stroke="#222" stroke-width="1.2"/>
<line x1="1288.5" y1="410.9" x2="1294" y2="410.9" stroke="#333" stroke-width="1.2"/>
<line x1="211" y1="400.7" x2="213.5" y2="400.7" stroke="#222" stroke-width="1.2"/>
<line x1="1291.5" y1="400.7" x2="1294" y2="400.7" stroke="#333" stroke-width="1.2"/>
<line x1="211" y1="390.6" x2="213.5" y2="390.6" stroke="#222" stroke-width="1.2"/>
<line x1="1291.5" y1="390.6" x2="1294" y2="390.6" stroke="#333" stroke-width="1.2"/>
<line x1="211" y1="380.4" x2="213.5" y2="380.4" stroke="#222" stroke-width="1.2"/>
<line x1="1291.5" y1="380.4" x2="1294" y2="380.4" stroke="#333" stroke-width="1.2"/>
<line x1="211" y1="370.2" x2="213.5" y2="370.2" stroke="#222" stroke-width="1.2"/>
<line x1="1291.5" y1="370.2" x2="1294" y2="370.2" stroke="#333" stroke-width="1.2"/>
<line x1="211" y1="360.0" x2="216.5" y2="360.0" stroke="#222" stroke-width="1.2"/>
<line x1="1288.5" y1="360.0" x2="1294" y2="360.0" stroke="#333" stroke-width="1.2"/>
<line x1="211" y1="349.8" x2="213.5" y2="349.8" stroke="#222" stroke-width="1.2"/>
<line x1="1291.5" y1="349.8" x2="1294" y2="349.8" stroke="#333" stroke-width="1.2"/>
<line x1="211" y1="339.6" x2="213.5" y2="339.6" stroke="#222" stroke-width="1.2"/>
<line x1="1291.5" y1="339.6" x2="1294" y2="339.6" stroke="#333" stroke-width="1.2"/>
<line x1="221.8" y1="691" x2="221.8" y2="688.5" stroke="#222" stroke-width="1.2"/>
<line x1="221.8" y1="335" x2="221.8" y2="337.5" stroke="#222" stroke-width="1.2"/>
<line x1="251.3" y1="691" x2="251.3" y2="685.5" stroke="#222" stroke-width="1.2"/>
<line x1="251.3" y1="335" x2="251.3" y2="340.5" stroke="#222" stroke-width="1.2"/>
<line x1="280.8" y1="691" x2="280.8" y2="688.5" stroke="#222" stroke-width="1.2"/>
<line x1="280.8" y1="335" x2="280.8" y2="337.5" stroke="#222" stroke-width="1.2"/>
<line x1="310.3" y1="691" x2="310.3" y2="685.5" stroke="#222" stroke-width="1.2"/>
<line x1="310.3" y1="335" x2="310.3" y2="340.5" stroke="#222" stroke-width="1.2"/>
<line x1="339.7" y1="691" x2="339.7" y2="688.5" stroke="#222" stroke-width="1.2"/>
<line x1="339.7" y1="335" x2="339.7" y2="337.5" stroke="#222" stroke-width="1.2"/>
<line x1="369.2" y1="691" x2="369.2" y2="685.5" stroke="#222" stroke-width="1.2"/>
<line x1="369.2" y1="335" x2="369.2" y2="340.5" stroke="#222" stroke-width="1.2"/>
<line x1="398.7" y1="691" x2="398.7" y2="688.5" stroke="#222" stroke-width="1.2"/>
<line x1="398.7" y1="335" x2="398.7" y2="337.5" stroke="#222" stroke-width="1.2"/>
<line x1="428.2" y1="691" x2="428.2" y2="685.5" stroke="#222" stroke-width="1.2"/>
<line x1="428.2" y1="335" x2="428.2" y2="340.5" stroke="#222" stroke-width="1.2"/>
<line x1="457.7" y1="691" x2="457.7" y2="688.5" stroke="#222" stroke-width="1.2"/>
<line x1="457.7" y1="335" x2="457.7" y2="337.5" stroke="#222" stroke-width="1.2"/>
<line x1="487.1" y1="691" x2="487.1" y2="685.5" stroke="#222" stroke-width="1.2"/>
<line x1="487.1" y1="335" x2="487.1" y2="340.5" stroke="#222" stroke-width="1.2"/>
<line x1="516.6" y1="691" x2="516.6" y2="688.5" stroke="#222" stroke-width="1.2"/>
<line x1="516.6" y1="335" x2="516.6" y2="337.5" stroke="#222" stroke-width="1.2"/>
<line x1="546.1" y1="691" x2="546.1" y2="685.5" stroke="#222" stroke-width="1.2"/>
<line x1="546.1" y1="335" x2="546.1" y2="340.5" stroke="#222" stroke-width="1.2"/>
<line x1="575.6" y1="691" x2="575.6" y2="688.5" stroke="#222" stroke-width="1.2"/>
<line x1="575.6" y1="335" x2="575.6" y2="337.5" stroke="#222" stroke-width="1.2"/>
<line x1="605.1" y1="691" x2="605.1" y2="685.5" stroke="#222" stroke-width="1.2"/>
<line x1="605.1" y1="335" x2="605.1" y2="340.5" stroke="#222" stroke-width="1.2"/>
<line x1="634.5" y1="691" x2="634.5" y2="688.5" stroke="#222" stroke-width="1.2"/>
<line x1="634.5" y1="335" x2="634.5" y2="337.5" stroke="#222" stroke-width="1.2"/>
<line x1="664.0" y1="691" x2="664.0" y2="685.5" stroke="#222" stroke-width="1.2"/>
<line x1="664.0" y1="335" x2="664.0" y2="340.5" stroke="#222" stroke-width="1.2"/>
<line x1="693.5" y1="691" x2="693.5" y2="688.5" stroke="#222" stroke-width="1.2"/>
<line x1="693.5" y1="335" x2="693.5" y2="337.5" stroke="#222" stroke-width="1.2"/>
<line x1="723.0" y1="691" x2="723.0" y2="685.5" stroke="#222" stroke-width="1.2"/>
<line x1="723.0" y1="335" x2="723.0" y2="340.5" stroke="#222" stroke-width="1.2"/>
<line x1="752.5" y1="691" x2="752.5" y2="688.5" stroke="#222" stroke-width="1.2"/>
<line x1="752.5" y1="335" x2="752.5" y2="337.5" stroke="#222" stroke-width="1.2"/>
<line x1="781.9" y1="691" x2="781.9" y2="685.5" stroke="#222" stroke-width="1.2"/>
<line x1="781.9" y1="335" x2="781.9" y2="340.5" stroke="#222" stroke-width="1.2"/>
<line x1="811.4" y1="691" x2="811.4" y2="688.5" stroke="#222" stroke-width="1.2"/>
<line x1="811.4" y1="335" x2="811.4" y2="337.5" stroke="#222" stroke-width="1.2"/>
<line x1="840.9" y1="691" x2="840.9" y2="685.5" stroke="#222" stroke-width="1.2"/>
<line x1="840.9" y1="335" x2="840.9" y2="340.5" stroke="#222" stroke-width="1.2"/>
<line x1="870.4" y1="691" x2="870.4" y2="688.5" stroke="#222" stroke-width="1.2"/>
<line x1="870.4" y1="335" x2="870.4" y2="337.5" stroke="#222" stroke-width="1.2"/>
<line x1="899.9" y1="691" x2="899.9" y2="685.5" stroke="#222" stroke-width="1.2"/>
<line x1="899.9" y1="335" x2="899.9" y2="340.5" stroke="#222" stroke-width="1.2"/>
<line x1="929.3" y1="691" x2="929.3" y2="688.5" stroke="#222" stroke-width="1.2"/>
<line x1="929.3" y1="335" x2="929.3" y2="337.5" stroke="#222" stroke-width="1.2"/>
<line x1="958.8" y1="691" x2="958.8" y2="685.5" stroke="#222" stroke-width="1.2"/>
<line x1="958.8" y1="335" x2="958.8" y2="340.5" stroke="#222" stroke-width="1.2"/>
<line x1="988.3" y1="691" x2="988.3" y2="688.5" stroke="#222" stroke-width="1.2"/>
<line x1="988.3" y1="335" x2="988.3" y2="337.5" stroke="#222" stroke-width="1.2"/>
<line x1="1017.8" y1="691" x2="1017.8" y2="685.5" stroke="#222" stroke-width="1.2"/>
<line x1="1017.8" y1="335" x2="1017.8" y2="340.5" stroke="#222" stroke-width="1.2"/>
<line x1="1047.3" y1="691" x2="1047.3" y2="688.5" stroke="#222" stroke-width="1.2"/>
<line x1="1047.3" y1="335" x2="1047.3" y2="337.5" stroke="#222" stroke-width="1.2"/>
<line x1="1076.7" y1="691" x2="1076.7" y2="685.5" stroke="#222" stroke-width="1.2"/>
<line x1="1076.7" y1="335" x2="1076.7" y2="340.5" stroke="#222" stroke-width="1.2"/>
<line x1="1106.2" y1="691" x2="1106.2" y2="688.5" stroke="#222" stroke-width="1.2"/>
<line x1="1106.2" y1="335" x2="1106.2" y2="337.5" stroke="#222" stroke-width="1.2"/>
<line x1="1135.7" y1="691" x2="1135.7" y2="685.5" stroke="#222" stroke-width="1.2"/>
<line x1="1135.7" y1="335" x2="1135.7" y2="340.5" stroke="#222" stroke-width="1.2"/>
<line x1="1165.2" y1="691" x2="1165.2" y2="688.5" stroke="#222" stroke-width="1.2"/>
<line x1="1165.2" y1="335" x2="1165.2" y2="337.5" stroke="#222" stroke-width="1.2"/>
<line x1="1194.7" y1="691" x2="1194.7" y2="685.5" stroke="#222" stroke-width="1.2"/>
<line x1="1194.7" y1="335" x2="1194.7" y2="340.5" stroke="#222" stroke-width="1.2"/>
<line x1="1224.1" y1="691" x2="1224.1" y2="688.5" stroke="#222" stroke-width="1.2"/>
<line x1="1224.1" y1="335" x2="1224.1" y2="337.5" stroke="#222" stroke-width="1.2"/>
<line x1="1253.6" y1="691" x2="1253.6" y2="685.5" stroke="#222" stroke-width="1.2"/>
<line x1="1253.6" y1="335" x2="1253.6" y2="340.5" stroke="#222" stroke-width="1.2"/>
<line x1="1283.1" y1="691" x2="1283.1" y2="688.5" stroke="#222" stroke-width="1.2"/>
<line x1="1283.1" y1="335" x2="1283.1" y2="337.5" stroke="#222" stroke-width="1.2"/>
<text x="206" y="671.8" text-anchor="end" font-family="Liberation Sans, sans-serif" font-size="15.6" fill="#111" stroke="#111" stroke-width=".25">0</text>
<text x="206" y="620.9" text-anchor="end" font-family="Liberation Sans, sans-serif" font-size="15.6" fill="#111" stroke="#111" stroke-width=".25">0.005</text>
<text x="206" y="569.9" text-anchor="end" font-family="Liberation Sans, sans-serif" font-size="15.6" fill="#111" stroke="#111" stroke-width=".25">0.01</text>
<text x="206" y="519.0" text-anchor="end" font-family="Liberation Sans, sans-serif" font-size="15.6" fill="#111" stroke="#111" stroke-width=".25">0.015</text>
<text x="206" y="468.1" text-anchor="end" font-family="Liberation Sans, sans-serif" font-size="15.6" fill="#111" stroke="#111" stroke-width=".25">0.02</text>
<text x="206" y="417.1" text-anchor="end" font-family="Liberation Sans, sans-serif" font-size="15.6" fill="#111" stroke="#111" stroke-width=".25">0.025</text>
<text x="206" y="366.2" text-anchor="end" font-family="Liberation Sans, sans-serif" font-size="15.6" fill="#111" stroke="#111" stroke-width=".25">0.03</text>
<text x="251.3" y="709" text-anchor="middle" font-family="Liberation Sans, sans-serif" font-size="15.6" fill="#111" stroke="#111" stroke-width=".25">0</text>
<text x="310.3" y="709" text-anchor="middle" font-family="Liberation Sans, sans-serif" font-size="15.6" fill="#111" stroke="#111" stroke-width=".25">2</text>
<text x="369.2" y="709" text-anchor="middle" font-family="Liberation Sans, sans-serif" font-size="15.6" fill="#111" stroke="#111" stroke-width=".25">4</text>
<text x="428.2" y="709" text-anchor="middle" font-family="Liberation Sans, sans-serif" font-size="15.6" fill="#111" stroke="#111" stroke-width=".25">6</text>
<text x="487.1" y="709" text-anchor="middle" font-family="Liberation Sans, sans-serif" font-size="15.6" fill="#111" stroke="#111" stroke-width=".25">8</text>
<text x="546.1" y="709" text-anchor="middle" font-family="Liberation Sans, sans-serif" font-size="15.6" fill="#111" stroke="#111" stroke-width=".25">10</text>
<text x="605.1" y="709" text-anchor="middle" font-family="Liberation Sans, sans-serif" font-size="15.6" fill="#111" stroke="#111" stroke-width=".25">12</text>
<text x="664.0" y="709" text-anchor="middle" font-family="Liberation Sans, sans-serif" font-size="15.6" fill="#111" stroke="#111" stroke-width=".25">14</text>
<text x="723.0" y="709" text-anchor="middle" font-family="Liberation Sans, sans-serif" font-size="15.6" fill="#111" stroke="#111" stroke-width=".25">16</text>
<text x="781.9" y="709" text-anchor="middle" font-family="Liberation Sans, sans-serif" font-size="15.6" fill="#111" stroke="#111" stroke-width=".25">18</text>
<text x="840.9" y="709" text-anchor="middle" font-family="Liberation Sans, sans-serif" font-size="15.6" fill="#111" stroke="#111" stroke-width=".25">20</text>
<text x="899.9" y="709" text-anchor="middle" font-family="Liberation Sans, sans-serif" font-size="15.6" fill="#111" stroke="#111" stroke-width=".25">22</text>
<text x="958.8" y="709" text-anchor="middle" font-family="Liberation Sans, sans-serif" font-size="15.6" fill="#111" stroke="#111" stroke-width=".25">24</text>
<text x="1017.8" y="709" text-anchor="middle" font-family="Liberation Sans, sans-serif" font-size="15.6" fill="#111" stroke="#111" stroke-width=".25">26</text>
<text x="1076.7" y="709" text-anchor="middle" font-family="Liberation Sans, sans-serif" font-size="15.6" fill="#111" stroke="#111" stroke-width=".25">28</text>
<text x="1135.7" y="709" text-anchor="middle" font-family="Liberation Sans, sans-serif" font-size="15.6" fill="#111" stroke="#111" stroke-width=".25">30</text>
<text x="1194.7" y="709" text-anchor="middle" font-family="Liberation Sans, sans-serif" font-size="15.6" fill="#111" stroke="#111" stroke-width=".25">32</text>
<text x="1253.6" y="709" text-anchor="middle" font-family="Liberation Sans, sans-serif" font-size="15.6" fill="#111" stroke="#111" stroke-width=".25">34</text>
<circle cx="251.3" cy="665.6" r="2.9" fill="#1a1ab8"/>
<circle cx="280.8" cy="665.6" r="2.9" fill="#1a1ab8"/>
<circle cx="310.3" cy="665.6" r="2.9" fill="#1a1ab8"/>
<circle cx="339.7" cy="665.6" r="2.9" fill="#1a1ab8"/>
<circle cx="369.2" cy="665.6" r="2.9" fill="#1a1ab8"/>
<circle cx="398.7" cy="665.6" r="2.9" fill="#1a1ab8"/>
<circle cx="428.2" cy="360.0" r="2.9" fill="#1a1ab8"/>
<circle cx="457.7" cy="360.0" r="2.9" fill="#1a1ab8"/>
<circle cx="487.1" cy="360.0" r="2.9" fill="#1a1ab8"/>
<circle cx="516.6" cy="665.6" r="2.9" fill="#1a1ab8"/>
<circle cx="546.1" cy="665.6" r="2.9" fill="#1a1ab8"/>
<circle cx="575.6" cy="360.0" r="2.9" fill="#1a1ab8"/>
<circle cx="605.1" cy="360.0" r="2.9" fill="#1a1ab8"/>
<circle cx="634.5" cy="360.0" r="2.9" fill="#1a1ab8"/>
<circle cx="664.0" cy="665.6" r="2.9" fill="#1a1ab8"/>
<circle cx="693.5" cy="665.6" r="2.9" fill="#1a1ab8"/>
<circle cx="723.0" cy="665.6" r="2.9" fill="#1a1ab8"/>
<circle cx="752.5" cy="614.7" r="2.9" fill="#1a1ab8"/>
<circle cx="781.9" cy="614.7" r="2.9" fill="#1a1ab8"/>
<circle cx="811.4" cy="665.6" r="2.9" fill="#1a1ab8"/>
<circle cx="840.9" cy="665.6" r="2.9" fill="#1a1ab8"/>
<circle cx="870.4" cy="665.6" r="2.9" fill="#1a1ab8"/>
<circle cx="899.9" cy="665.6" r="2.9" fill="#1a1ab8"/>
<circle cx="929.3" cy="665.6" r="2.9" fill="#1a1ab8"/>
<circle cx="958.8" cy="665.6" r="2.9" fill="#1a1ab8"/>
<circle cx="988.3" cy="665.6" r="2.9" fill="#1a1ab8"/>
<circle cx="1017.8" cy="665.6" r="2.9" fill="#1a1ab8"/>
<circle cx="1047.3" cy="665.6" r="2.9" fill="#1a1ab8"/>
<circle cx="1076.7" cy="665.6" r="2.9" fill="#1a1ab8"/>
<circle cx="1106.2" cy="665.6" r="2.9" fill="#1a1ab8"/>
<circle cx="1135.7" cy="665.6" r="2.9" fill="#1a1ab8"/>
<circle cx="1165.2" cy="665.6" r="2.9" fill="#1a1ab8"/>
<circle cx="1194.7" cy="665.6" r="2.9" fill="#1a1ab8"/>
<circle cx="1224.1" cy="665.6" r="2.9" fill="#1a1ab8"/>
<circle cx="1253.6" cy="665.6" r="2.9" fill="#1a1ab8"/>
<polyline points="251.9,666.4 281.4,666.4 310.9,666.4 340.3,666.4 369.8,666.4 399.3,666.4 428.8,360.8 458.3,360.8 487.7,360.8 517.2,666.4 546.7,666.4 576.2,360.8 605.7,360.8 635.1,360.8 664.6,666.4 694.1,666.4 723.6,666.4 753.1,615.5 782.5,615.5 812.0,666.4 841.5,666.4 871.0,666.4 900.5,666.4 929.9,666.4 959.4,666.4 988.9,666.4 1018.4,666.4 1047.9,666.4 1077.3,666.4 1106.8,666.4 1136.3,666.4 1165.8,666.4 1195.3,666.4 1224.7,666.4 1254.2,666.4" fill="none" stroke="#e00a0a" stroke-width="2.8" stroke-linejoin="miter" opacity=".9"/>
</svg>
</body></html>
